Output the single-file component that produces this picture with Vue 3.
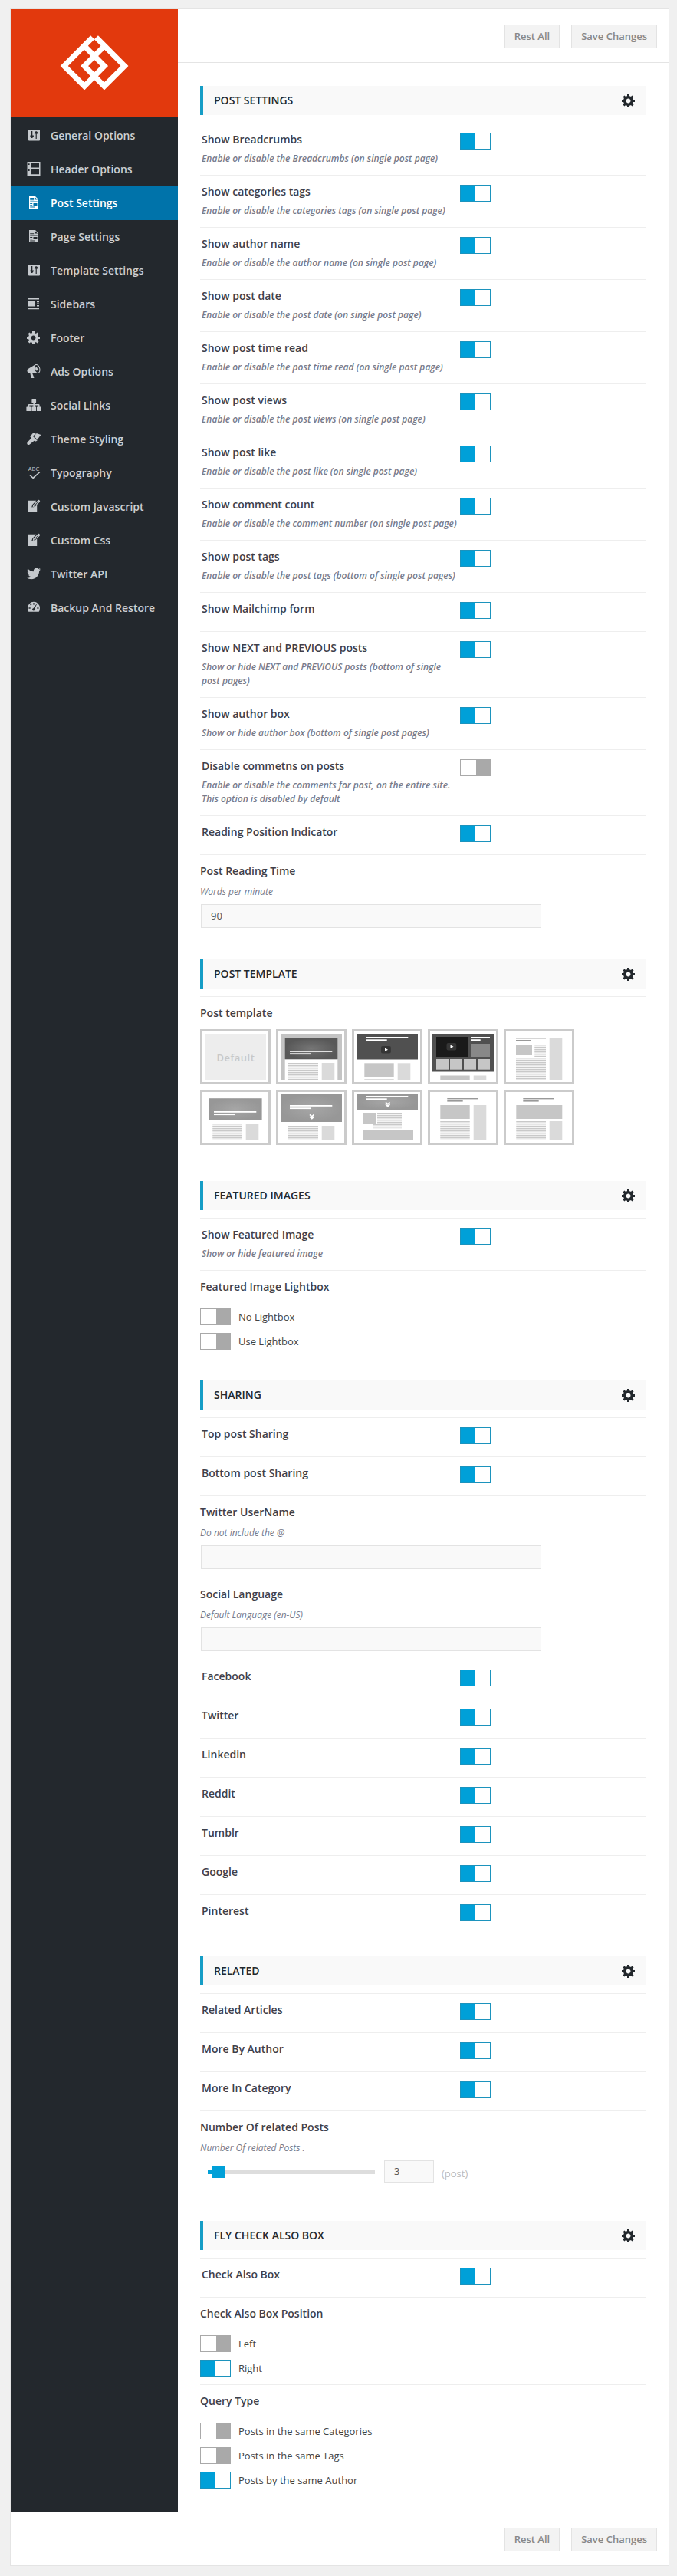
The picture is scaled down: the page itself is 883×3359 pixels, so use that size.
<script setup>
const gear = 'M18 12h-2.18c-.17.7-.44 1.35-.81 1.93l1.54 1.54-2.1 2.1-1.54-1.54c-.58.36-1.23.63-1.91.79V19H8v-2.18c-.68-.16-1.33-.43-1.91-.79l-1.54 1.54-2.12-2.12 1.54-1.54c-.36-.58-.63-1.23-.79-1.91H1V9.03h2.17c.16-.7.44-1.35.8-1.94L2.43 5.55l2.1-2.1 1.54 1.54c.58-.37 1.24-.64 1.93-.81V2h3v2.18c.68.16 1.33.43 1.91.79l1.54-1.54 2.12 2.12-1.54 1.54c.36.59.64 1.24.8 1.94H18V12zm-8.5 1.5c1.66 0 3-1.34 3-3s-1.34-3-3-3-3 1.34-3 3 1.34 3 3 3z'
const sliders = 'M4 3h13a1 1 0 0 1 1 1v12.5a1 1 0 0 1-1 1H4a1 1 0 0 1-1-1V4a1 1 0 0 1 1-1zM7 5v5.500H5.400v1.200L7.100 14h1.100l1.700-2.300v-1.200H8.300V5zM12.600 5.200l-1.700 1.900v1.300h1.700V15h1.200V8.400h1.700V7.100l-1.700-1.900z'
const doc = 'M4 2h8l4 4v12H4zM5.200 4v1h5V4zM5.200 6.300v1h5v-1zM11.500 3v3.500H15zM5.200 8.600v1h9.500v-1zM5.200 11v1h3V11zM9.500 11v3h5v-3zM5.200 13.300v1h3v-1zM5.200 15.600v1h6.500v-1z'
const edit = 'M3 2.800h10.300L8.300 8 7.200 11.600l3.800-1 3.200-3.300V18H3zM9.200 8.600l6-6.200q1.200-1.200 2.400 0t0 2.400l-6 6-3 .8zM10.300 9.200l.5.500 5.600-5.800-.4-.4z'
const icons = {
  sliders, doc, edit, gear,
  header: 'M1.500 1h17v18h-17zM6 3v5.500h11V3zM6 11v6.300h11V11zM2.700 3.200v1.900h1.900V3.200zM2.700 11v1.900h1.900V11z',
  sidebar: 'M3 2.700h14v1.900H3zM3 6.700h9v6.800H3zM14 6.700h3v1.600h-3zM14 9.400h3v1.600h-3zM14 12h3v1.600h-3zM3 15.400h14v1.900H3z',
  horn: 'M18.150 5.940c.46 1.620.38 3.220-.02 4.480-.42 1.280-1.260 2.180-2.300 2.480-.16.060-.26.060-.4.060-.06.020-.12.020-.18.020-.06.020-.14.020-.22.020h-6.800l2.220 5.500c.02.140-.06.260-.14.340-.08.100-.24.160-.34.160H6.950c-.1 0-.26-.06-.34-.16-.08-.08-.16-.2-.14-.34l-1-5.500H4.250l-.02-.02c-.5.060-1.080-.18-1.540-.62s-.88-1.080-1.060-1.880c-.24-.8-.2-1.560-.02-2.200.18-.62.58-1.080 1.060-1.300l.02-.02 9-5.400c.1-.06.18-.1.24-.16.06-.04.14-.08.24-.12.16-.08.28-.12.5-.18 1.040-.3 2.240.100 3.220.98s1.840 2.240 2.260 3.860zm-2.580 5.980h-.02c.4-.1.74-.34 1.040-.7.58-.7.86-1.760.86-3.040 0-.64-.1-1.300-.28-1.980-.34-1.360-1.020-2.500-1.780-3.240s-1.680-1.100-2.460-.88c-.82.220-1.400.960-1.700 2-.32 1.040-.28 2.360.060 3.720.38 1.360 1 2.500 1.800 3.240.78.740 1.620 1.100 2.480.88zm-2.540-7.080c.22-.04.42-.02.62.040.38.160.76.480 1.020 1s.42 1.200.42 1.780c0 .3-.04.560-.12.800-.18.480-.44.840-.86.940-.34.100-.8-.06-1.140-.4s-.64-.86-.78-1.500c-.18-.62-.12-1.240.020-1.720s.48-.84.820-.94z',
  tree: 'M8 2h4.500q.6 0 .6.600v3.800q0 .6-.6.600h-1.500v2h5.300q1.300 0 1.300 1.300V12.500h1.600q.6 0 .6.600v4.300q0 .6-.6.600h-4.600q-.6 0-.6-.6v-4.300q0-.6.6-.6h1.500v-1.900H11v1.900h1.500q.6 0 .6.600v4.300q0 .6-.6.600H8q-.6 0-.6-.6v-4.300q0-.6.600-.6h1.400v-1.900H4.300v1.900h1.500q.6 0 .6.600v4.300q0 .6-.6.600H1q-.6 0-.6-.6v-4.300q0-.6.600-.6h1.700v-2.200Q2.700 9 4 9h5.400V7H8q-.6 0-.6-.6V2.600Q7.400 2 8 2z',
  brush: 'M8.500 3.200Q10.800 1.200 13 3l-4.200 3.700 5.300 5.400 1-1q-.4 1.800-2.200 2.300-1.300.2-2.300-.6L4.700 17.600q-1.600 1-3 0-1.200-1.400.2-3L7 9.300 5.700 8q-.6-.8.100-1.600zM10 6.600L13.800 3l5.600 2-4.900 6.300z',
  pen: 'M5.800 13.200L9 16.200l8.500-7.300.9 1L9.200 18.500 4.300 14z',
  bird: 'M18.940 4.460c-.49.730-1.110 1.380-1.830 1.900.010.150.010.310.010.470 0 4.850-3.690 10.440-10.430 10.440-2.070 0-4-.61-5.630-1.650.290.030.580.050.880.050 1.720 0 3.300-.59 4.550-1.570-1.600-.03-2.950-1.090-3.420-2.550.220.040.450.070.690.070.330 0 .66-.05.960-.13-1.670-.34-2.940-1.820-2.940-3.600v-.04c.5.270 1.060.440 1.660.460-.98-.66-1.630-1.780-1.630-3.060 0-.67.180-1.300.5-1.840 1.810 2.220 4.510 3.680 7.560 3.830-.06-.27-.1-.55-.1-.84 0-2.020 1.650-3.660 3.670-3.660 1.060 0 2.010.440 2.680 1.160.830-.17 1.620-.47 2.330-.89-.28.850-.86 1.570-1.620 2.020.750-.08 1.450-.28 2.110-.57z',
  gauge: 'M10 2.800a8 8 0 0 1 8 8q0 3-1.300 5H3.300Q2 13.800 2 10.800a8 8 0 0 1 8-8zM9.200 4.200v2.200h1.600V4.200zM5 6l1.200 1.800 1.300-1.200L6 5zM3.500 10.200v1.600h2.200v-1.600zM14.300 10.200v1.600h2.200v-1.600zM13.800 5.200L9.700 10.900q-1.700.4-1.700 1.800 0 1.700 1.800 1.700t1.800-1.700q0-.7-.3-1.200l2.900-5.900z'
}
const nav = [
  ['General Options', 'sliders'], ['Header Options', 'header'], ['Post Settings', 'doc', true],
  ['Page Settings', 'doc'], ['Template Settings', 'sliders'], ['Sidebars', 'sidebar'],
  ['Footer', 'gear'], ['Ads Options', 'horn'], ['Social Links', 'tree'], ['Theme Styling', 'brush'],
  ['Typography', 'pen'], ['Custom Javascript', 'edit'], ['Custom Css', 'edit'],
  ['Twitter API', 'bird'], ['Backup And Restore', 'gauge']
]

const sw = (title, desc, off) => ({ type: 'switch', title, desc, off })
const sections = [
  { title: 'POST SETTINGS', items: [
    sw('Show Breadcrumbs', 'Enable or disable the Breadcrumbs (on single post page)'),
    sw('Show categories tags', 'Enable or disable the categories tags (on single post page)'),
    sw('Show author name', 'Enable or disable the author name (on single post page)'),
    sw('Show post date', 'Enable or disable the post date (on single post page)'),
    sw('Show post time read', 'Enable or disable the post time read (on single post page)'),
    sw('Show post views', 'Enable or disable the post views (on single post page)'),
    sw('Show post like', 'Enable or disable the post like (on single post page)'),
    sw('Show comment count', 'Enable or disable the comment number (on single post page)'),
    sw('Show post tags', 'Enable or disable the post tags (bottom of single post pages)'),
    sw('Show Mailchimp form'),
    sw('Show NEXT and PREVIOUS posts', 'Show or hide NEXT and PREVIOUS posts (bottom of single post pages)'),
    sw('Show author box', 'Show or hide author box (bottom of single post pages)'),
    sw('Disable commetns on posts', 'Enable or disable the comments for post, on the entire site. This option is disabled by default', true),
    sw('Reading Position Indicator'),
    { type: 'input', title: 'Post Reading Time', desc: 'Words per minute', value: '90' }
  ] },
  { title: 'POST TEMPLATE', items: [{ type: 'templates', title: 'Post template' }] },
  { title: 'FEATURED IMAGES', items: [
    sw('Show Featured Image', 'Show or hide featured image'),
    { type: 'radio', title: 'Featured Image Lightbox', options: [['No Lightbox'], ['Use Lightbox']] }
  ] },
  { title: 'SHARING', items: [
    sw('Top post Sharing'), sw('Bottom post Sharing'),
    { type: 'input', title: 'Twitter UserName', desc: 'Do not include the @', value: '' },
    { type: 'input', title: 'Social Language', desc: 'Default Language (en-US)', value: '' },
    sw('Facebook'), sw('Twitter'), sw('Linkedin'), sw('Reddit'), sw('Tumblr'), sw('Google'), sw('Pinterest')
  ] },
  { title: 'RELATED', items: [
    sw('Related Articles'), sw('More By Author'), sw('More In Category'),
    { type: 'slider', title: 'Number Of related Posts', desc: 'Number Of related Posts .', value: '3', unit: '(post)' }
  ] },
  { title: 'FLY CHECK ALSO BOX', items: [
    sw('Check Also Box'),
    { type: 'radio', title: 'Check Also Box Position', options: [['Left'], ['Right', true]] },
    { type: 'radio', title: 'Query Type', options: [['Posts in the same Categories'], ['Posts in the same Tags'], ['Posts by the same Author', true]] }
  ] }
]

// Thumbnail building blocks: [x, y, width, height, fill]
const W = '#fff', M = '#c6c6c6', L = '#dadada', D = '#505050', T = '#999'
const text = (x, y, w, h) => {
  const out = [[x, y, w, h, '#f3f3f3']]
  for (let i = 0; i < h; i += 3) out.push([x, y + i, w, Math.min(1.3, h - i), '#c9c9c9'])
  return out
}
const caption = (y) => [[12, y, 55.3, 1.8, W], [12, y + 3.300, 27.7, 1.8, W]]
const thumbs = [
  { rects: [[0, 0, 80, 60, '#ededed']], label: 'Default' },
  { rects: [[0, 0, 80, 60, '#c4c4c4'], [5.700, 33, 68.600, 27, W], [5.700, 5.700, 68.600, 27.600, 'url(#shade-dark)'], ...caption(22), ...text(10, 38, 39, 22), [53.700, 38, 16.600, 22, L]] },
  { rects: [[0, 0, 80, 33.500, D], ...caption(4), [10.300, 38.300, 38.400, 17.700, M], [53.700, 38.300, 16.600, 21.700, L], [10.300, 59, 38.400, 1, L]], play: [32, 16] },
  { rects: [[0, 0, 80, 49.500, D], [5, 4, 41, 26, '#1a1a1a'], [50, 4, 25, 1.800, W], [50, 7.200, 12.700, 1.800, W], [50, 13, 25, 17, '#888'], [5, 33, 16, 13.700, M], [23, 33, 16, 13.700, M], [41, 33, 16, 13.700, M], [59, 33, 16, 13.700, M], [10.300, 54.500, 38.400, 5.500, M], [53.700, 54.500, 16.600, 5.500, L]], play: [18.5, 12] },
  { rects: [[10, 5, 39, 1.400, T], [10, 8, 19.700, 1.500, T], [10, 14, 21, 14, M], ...text(34.3, 14, 14.7, 16), ...text(10, 31, 39, 29), [53.700, 5, 16.600, 55, L]] },
  { rects: [[5.300, 5.200, 69.300, 28.600, 'url(#shade)'], ...caption(22), ...text(10.3, 38, 38.7, 22), [53.700, 38, 16.600, 22, L]] },
  { rects: [[0, 0, 80, 36, 'url(#shade)'], ...caption(14), ...text(10, 41, 39, 19), [53.700, 41, 16.600, 19, L]], chevron: [37.5, 25.7] },
  { rects: [[0, 0, 80, 20, 'url(#shade)'], ...caption(2), [8, 24, 17, 14, M], ...text(27, 24, 32, 14), ...text(21, 39, 38, 6), [8, 46, 66, 14, M]], chevron: [37.5, 9.7] },
  { rects: [[19.300, 5, 40.700, 1.400, T], [19.300, 8, 20.400, 1.600, T], [10.300, 14, 38.400, 18, M], ...text(10.3, 35, 38.4, 25), [53.700, 14, 16.600, 46, L]] },
  { rects: [[19.300, 5, 40.700, 1.400, T], [19.300, 8, 20.400, 1.600, T], [10.300, 14, 60, 18, M], ...text(10.3, 35, 38.7, 25), [53.700, 35, 16.600, 25, L]] }
]
</script>

<template>
  <div class="page">
    <div class="panel">
      <div class="body">
        <aside class="sidebar">
          <div class="logo">
            <svg width="90" height="74" viewBox="78.300 45 90 74" fill="none" stroke="#fff" stroke-width="7.200">
              <path d="M121 48.700L84 86l26.400 26.400L136.300 86 110.400 60" />
              <path d="M125.700 48.700L162.700 86l-26.400 26.400L110.400 86l26-26" />
            </svg>
          </div>
          <nav>
            <a v-for="[label, icon, active] in nav" :key="label" class="nav-item" :class="{ active }">
              <svg class="nav-icon" viewBox="0 0 20 20">
                <path :d="icons[icon]" fill="currentColor" fill-rule="evenodd" />
                <text v-if="icon === 'pen'" x="10" y="8.200" class="abc">ABC</text>
              </svg>
              <span>{{ label }}</span>
            </a>
          </nav>
        </aside>
        <main class="content">
          <header class="bar top">
            <button>Rest All</button>
            <button>Save Changes</button>
          </header>
          <div class="sections">
            <section v-for="s in sections" :key="s.title">
              <h2>
                <span>{{ s.title }}</span>
                <svg width="20" height="20" viewBox="0 0 20 20"><path :d="gear" fill="currentColor" /></svg>
              </h2>
              <div v-for="item in s.items" :key="item.title" class="item" :class="item.type">
                <template v-if="item.type === 'switch'">
                  <div class="copy">
                    <h3>{{ item.title }}</h3>
                    <p v-if="item.desc">{{ item.desc }}</p>
                  </div>
                  <span class="toggle" :class="{ on: !item.off }"></span>
                </template>
                <template v-else>
                  <h3>{{ item.title }}</h3>
                  <p v-if="item.desc">{{ item.desc }}</p>
                  <div v-if="item.type === 'input'" class="field">{{ item.value }}</div>
                  <div v-if="item.type === 'radio'" class="options">
                    <div v-for="[label, on] in item.options" :key="label" class="option">
                      <span class="toggle" :class="{ on }"></span>
                      <span>{{ label }}</span>
                    </div>
                  </div>
                  <div v-if="item.type === 'slider'" class="range">
                    <div class="track"><i class="filled"></i><i class="handle"></i></div>
                    <div class="number">{{ item.value }}</div>
                    <span class="unit">{{ item.unit }}</span>
                  </div>
                  <div v-if="item.type === 'templates'" class="tiles">
                    <svg width="0" height="0" class="defs">
                      <radialGradient id="shade"><stop offset="0" stop-color="#a6a6a6" /><stop offset="1" stop-color="#979797" /></radialGradient>
                      <radialGradient id="shade-dark"><stop offset="0" stop-color="#767676" /><stop offset="1" stop-color="#585858" /></radialGradient>
                    </svg>
                    <div v-for="(t, i) in thumbs" :key="i" class="tile">
                      <svg width="80" height="60" viewBox="0 0 80 60">
                        <rect v-for="(r, j) in t.rects" :key="j" :x="r[0]" :y="r[1]" :width="r[2]" :height="r[3]" :fill="r[4]" />
                        <text v-if="t.label" x="40.500" y="36" class="tile-label">{{ t.label }}</text>
                        <g v-if="t.play" :transform="`translate(${t.play[0]} ${t.play[1]})`">
                          <rect width="12.800" height="9.500" rx="2" fill="#353535" />
                          <path d="M5 2.600l4 2.200-4 2.200z" fill="#fff" />
                        </g>
                        <path v-if="t.chevron" :transform="`translate(${t.chevron[0]} ${t.chevron[1]})`" d="M.5.700l2.800 2.500L6 .7M.5 3.500l2.800 2.500L6 3.500" fill="none" stroke="#fff" stroke-width="1.700" />
                      </svg>
                    </div>
                  </div>
                </template>
              </div>
            </section>
          </div>
        </main>
      </div>
      <footer class="bar bottom">
        <button>Rest All</button>
        <button>Save Changes</button>
      </footer>
    </div>
  </div>
</template>

<style>
html, body { background: #f0f0f0; }
</style>

<style scoped>
* { box-sizing: border-box; }
.page { background: #f0f0f0; padding: 11px 10px 13px 13px; font-family: "Open Sans", sans-serif; color: #3f3f4a; }
.panel { width: 860px; border: 1px solid #e4e4e4; background: #fff; }
.body { display: flex; }
.sidebar { width: 218px; background: #23282d; flex: none; }
.logo { height: 140px; background: #e2390d; display: flex; justify-content: center; padding-top: 33px; }
nav { padding-top: 3px; }
.nav-item { display: flex; align-items: center; height: 44px; padding: 0 0 0 20px; gap: 12px; font-size: 14px; font-weight: 600; line-height: 20px; color: #cdcfd1; }
.nav-item.active { background: #0073aa; color: #fff; }
.nav-icon { width: 20px; height: 20px; position: relative; top: -1px; color: #c5c9cd; flex: none; }
.active .nav-icon { color: #fff; }
.abc { font: 400 7.5px "Open Sans", sans-serif; fill: currentColor; text-anchor: middle; }
.content { flex: 1; }
.bar { height: 70px; padding: 20px 15px 0 0; display: flex; justify-content: flex-end; align-items: flex-start; gap: 15px; }
.top { border-bottom: 1px solid #e4e4e4; }
.bottom { border-top: 1px solid #e4e4e4; }
button { height: 31px; padding: 0 12px; border: 1px solid #e3e3e3; border-radius: 0; background: #f3f3f3; color: #888; font: 600 13px/29px "Open Sans", sans-serif; }
.sections { padding: 30px 29px 20px; display: flex; flex-direction: column; gap: 30px; }
h2 { margin: 0 0 10px; height: 38px; display: flex; align-items: center; justify-content: space-between; padding: 0 13px 0 14px; border-left: 4px solid #159dc6; background: #f9f9f9; font-size: 14px; font-weight: 600; line-height: 20px; color: #23282d; }
.item { display: flow-root; border-top: 1px solid #eee; padding-top: 11px; }
h3 { margin: 0; font-size: 14px; font-weight: 600; line-height: 20px; }
p { margin: 6px 0 0; font-size: 12px; line-height: 18px; font-style: italic; font-weight: 600; color: #777b8b; }
.switch { display: flex; padding: 11px 0 12px 2px; min-height: 51px; }
.copy { width: 337px; padding-right: 2px; flex: none; }
.switch .toggle { margin-top: 1px; }
.toggle { display: block; flex: none; width: 40px; height: 22px; border: 1px solid #a9a9a9; background: linear-gradient(to right, #fff 20px, #a9a9a9 20px); }
.toggle.on { border-color: #1c93bd; background: linear-gradient(to right, #00a0d8 18px, #fff 18px); }
.input p, .slider p { margin-top: 8px; font-weight: 400; }
.field { width: 444px; height: 31px; margin: 7px 0 11px 1px; border: 1px solid #e3e3e3; background: #f9f9f9; padding-left: 12px; font-size: 13px; line-height: 29px; color: #555; }
.options { padding: 18px 0 10px; display: flex; flex-direction: column; gap: 10px; }
.option { display: flex; align-items: center; gap: 10px; height: 22px; font-size: 13px; color: #444; }
.range { display: flex; align-items: flex-start; margin: 7px 0 20px 10px; height: 29px; }
.track { position: relative; width: 218px; height: 5px; margin-top: 13px; background: #ddd; }
.filled { position: absolute; left: 0; top: 0; width: 14px; height: 5px; background: #00a0d8; }
.handle { position: absolute; left: 6px; top: -6px; width: 16px; height: 16px; background: #00a0d8; }
.number { width: 65px; height: 29px; margin-left: 12px; border: 1px solid #e3e3e3; background: #f9f9f9; padding-left: 12px; font-size: 13px; line-height: 27px; color: #555; }
.unit { margin-left: 10px; font-size: 13px; line-height: 18px; padding-top: 8px; color: #bbb; }
.templates h3 { margin-bottom: 11px; }
.tiles { display: grid; grid-template-columns: repeat(5, 92px); gap: 7px; padding-bottom: 17px; }
.defs { position: absolute; }
.tile { height: 72px; border: 3px solid #cbcbcb; padding: 3px; }
.tile svg { display: block; }
.tile-label { font: 600 13px "Open Sans", sans-serif; letter-spacing: .5px; fill: #c8c8c8; text-anchor: middle; }
</style>
